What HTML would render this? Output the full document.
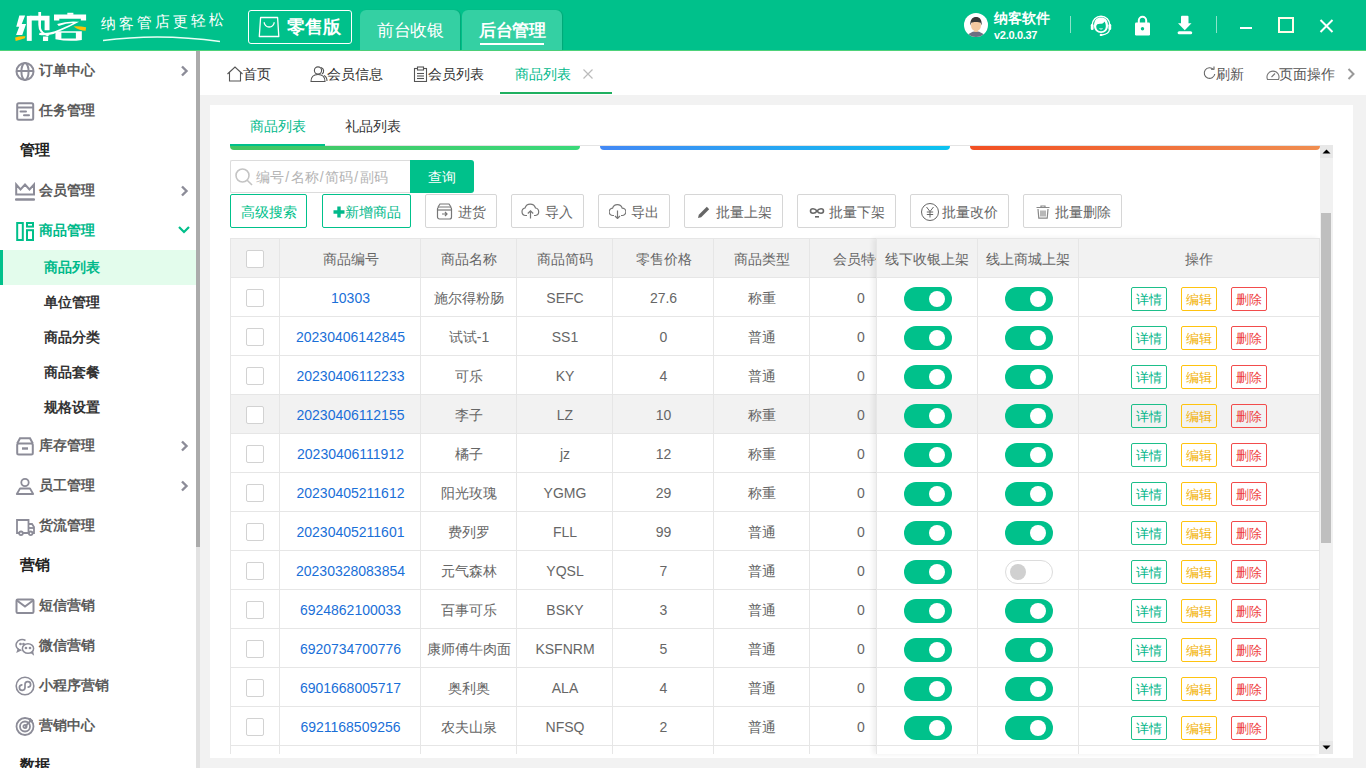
<!DOCTYPE html>
<html><head><meta charset="utf-8"><style>
*{box-sizing:border-box;margin:0;padding:0}
html,body{width:1366px;height:768px;overflow:hidden;background:#f2f2f2;font-family:"Liberation Sans",sans-serif;font-size:14px;color:#333}
.abs{position:absolute}
#hdr{position:absolute;z-index:10;left:0;top:0;width:1366px;height:51px;background:#00C18B;border-bottom:1px solid #4ED27A}
#side{position:absolute;left:0;top:50px;width:196px;height:718px;background:#fff;overflow:hidden}
#sbar{position:absolute;left:196px;top:51px;width:4px;height:717px;background:linear-gradient(#ababab 0,#ababab 496px,#e2e2e2 496px)}
.mi{position:absolute;left:0;width:196px;height:40px;font-weight:bold;color:#5b5b5b;font-size:14px;line-height:40px}
.mi .t{position:absolute;left:39px;top:0}
.mi svg.ic{position:absolute;left:16px;top:11px}
.mi .arr{position:absolute;left:178px;top:15px}
.sec{position:absolute;left:20px;font-weight:bold;color:#222;font-size:15px;line-height:40px}
.sub{position:absolute;left:0;width:196px;height:35px;line-height:35px;font-weight:bold;color:#333}
.sub .t{position:absolute;left:44px;top:0}
#tabs{position:absolute;left:200px;top:51px;width:1166px;height:44px;background:#fff}
.tb{position:absolute;top:1px;line-height:44px;color:#333;font-size:14px}
#card{position:absolute;left:210px;top:105px;width:1143px;height:653px;background:#fff}
.btnw{position:absolute;top:194px;height:34px;border:1px solid #d6d6d6;border-radius:2px;color:#666;font-size:14px;line-height:31px;text-align:center;background:#fff}
.btng{border-color:#00C18B;color:#00C18B}
.c{position:absolute;top:1px;height:38px;line-height:38px;text-align:center;color:#666;font-size:14px;white-space:nowrap}
.link{color:#1A6FD8}
.cb{position:absolute;top:10px;width:18px;height:18px;border:1px solid #d2d2d2;border-radius:2px;background:#fff}
.sw{position:absolute;top:9px;width:48px;height:24px;border-radius:12px}
.sw.on{background:#00C18B}
.sw.on:after{content:"";position:absolute;left:25px;top:4px;width:16px;height:16px;border-radius:50%;background:#fff}
.sw.off{background:#fff;border:1px solid #dcdcdc}
.sw.off:after{content:"";position:absolute;left:4px;top:3px;width:16px;height:16px;border-radius:50%;background:#d0d0d0}
.btn{position:absolute;top:9px;width:36px;height:24px;border:1px solid;border-radius:2px;font-size:13px;line-height:24px;text-align:center}
.b1{color:#00B589;border-color:#1DBF8A}
.b2{color:#F2B000;border-color:#FFC30F}
.b3{color:#EE3D3D;border-color:#F24C4C}
.vl{position:absolute;top:0;width:1px;height:516px;background:#e6e6e6}
.hl{position:absolute;left:0;width:700px;height:1px;background:#e6e6e6}
.r{position:absolute;left:0;width:700px;height:38px}
.th{position:absolute;top:2px;height:39px;line-height:39px;text-align:center;color:#666;font-size:14px}
.sl{display:inline-block;width:6.5px;text-align:center}
#tmain .c,#tmain .th{margin-left:1px}

</style></head><body>
<div id="hdr">
  <svg class="abs" style="left:10px;top:5px" width="90" height="43" viewBox="0 0 1366 653" preserveAspectRatio="none">
    <path d="M142 158 L230 158 L178 290 L244 290 L186 455 L92 455 L140 330 L95 330 Z" fill="#fff"/>
    <path d="M78 492 Q150 470 235 476 L226 505 Q150 528 86 548 Z" fill="#FFC107"/>
    <path d="M255 165 L330 165 L330 545 L255 545 Z" fill="#fff"/>
    <path d="M300 165 L600 165 L600 385 L525 385 L525 235 L300 235 Z" fill="#fff"/><path d="M502 478 L580 478 L578 548 L500 548 Z" fill="#fff"/>
    <path d="M430 108 L472 108 L470 300 Q460 400 540 430 L600 470 L560 470 Q430 430 430 300 Z" fill="#fff"/>
    <path d="M870 118 L962 118 L962 150 L870 150 Z" fill="#fff"/>
    <path d="M668 145 L1155 145 L1155 235 L1075 235 L1075 210 L748 210 L748 235 L668 235 Z" fill="#fff"/>
    <path d="M715 290 Q880 235 1048 255 Q900 340 700 420 L660 440 Q520 470 440 450 L450 420 Q560 440 680 400 Q880 320 960 275 Q850 275 740 318 Z" fill="#fff"/>
    <path d="M690 400 L1090 400 L1090 530 Q900 560 690 520 Z M780 420 L780 510 L1000 510 L1000 420 Z" fill="#fff" fill-rule="evenodd"/>
    <path d="M965 325 Q1060 320 1155 338 L1148 392 Q1060 390 965 325 Z" fill="#FFC107"/>
  </svg>
  <div class="abs" style="left:101px;top:11px;font-size:15px;line-height:22px;color:#fff;letter-spacing:3px;transform:rotate(-2deg)">纳客管店更轻松</div>
  <svg class="abs" style="left:100px;top:33px" width="124" height="12" viewBox="0 0 124 12"><path d="M3 7.5 Q60 0 120 8.5" fill="none" stroke="#E8FFF6" stroke-width="1.3"/></svg>
  <div class="abs" style="left:248px;top:10px;width:104px;height:34px;border:1px solid #fff;border-radius:3px"></div>
  <svg class="abs" style="left:258px;top:16px" width="22" height="22" viewBox="0 0 22 22" fill="none" stroke="#fff" stroke-width="1.3"><path d="M2.6 1.5 H19.6 L20.8 20.5 H1.3 Z" stroke-linejoin="round"/><path d="M6.2 6.2 A5 4.8 0 0 0 16.2 6.2"/></svg>
  <div class="abs" style="left:287px;top:15px;font-size:18px;line-height:24px;font-weight:bold;color:#fff">零售版</div>
  <div class="abs" style="left:360px;top:10px;width:100px;height:40px;background:#34D0A3;border-radius:6px 6px 0 0;box-shadow:1px 0 1px rgba(0,90,60,.25)"></div>
  <div class="abs" style="left:377px;top:20px;font-size:17px;line-height:22px;color:#fff;letter-spacing:-0.5px">前台收银</div>
  <div class="abs" style="left:462px;top:10px;width:100px;height:40px;background:#34D0A3;border-radius:6px 6px 0 0;box-shadow:1px 0 1px rgba(0,90,60,.25)"></div>
  <div class="abs" style="left:479px;top:20px;font-size:17px;line-height:22px;font-weight:bold;color:#fff;letter-spacing:-0.5px">后台管理</div>
  <div class="abs" style="left:480px;top:43px;width:64px;height:2px;background:#fff"></div>
  <svg class="abs" style="left:964px;top:13px" width="24" height="24" viewBox="0 0 24 24"><defs><clipPath id="avc"><circle cx="12" cy="12" r="12"/></clipPath></defs><circle cx="12" cy="12" r="12" fill="#fff"/><g clip-path="url(#avc)"><ellipse cx="12" cy="25" rx="8.5" ry="6.8" fill="#6E6F82"/><rect x="10.3" y="15" width="3.4" height="4" fill="#EFC096"/><ellipse cx="12" cy="12.6" rx="5" ry="5.4" fill="#F3C9A0"/><path d="M6.3 12.5 C5.8 6.5 8.8 4 12 4 C15.5 4 18.3 6.5 17.6 12.5 L16.6 9.8 C15 8.8 9 8.8 7.3 9.8 Z" fill="#383838"/></g></svg>
  <div class="abs" style="left:994px;top:10px;font-size:14px;line-height:16px;font-weight:bold;color:#fff">纳客软件</div>
  <div class="abs" style="left:994px;top:29px;font-size:11px;line-height:13px;font-weight:bold;color:#fff;letter-spacing:-0.3px">v2.0.0.37</div>
  <div class="abs" style="left:1070px;top:16px;width:1px;height:17px;background:rgba(255,255,255,.55)"></div>
  <svg class="abs" style="left:1090px;top:14px" width="22" height="22" viewBox="0 0 22 22"><path d="M2.2 11 A8.8 8.8 0 0 1 19.8 11" fill="none" stroke="#fff" stroke-width="1.4"/><path d="M4 12 C4 5.5 7 3.5 11 3.5 C15 3.5 18 5.5 18 12 C18 16 15 19 11 19 C7 19 4 16 4 12 Z" fill="#fff"/><path d="M6.2 12.5 C6.5 10 8.5 9.5 11.5 9.8 C13 9.8 14 8.5 14.3 7.5 C15.5 8.5 15.8 10.5 15.8 12.5 C15.8 15.5 13.8 17.3 11 17.3 C8.2 17.3 6.2 15.5 6.2 12.5 Z" fill="#00C18B"/><path d="M9.5 14.6 Q11 15.6 12.5 14.6" fill="none" stroke="#fff" stroke-width="0.9"/><rect x="0.8" y="10" width="2.8" height="6" rx="1.2" fill="#fff"/><rect x="18.4" y="10" width="2.8" height="6" rx="1.2" fill="#fff"/><path d="M19.5 15.5 Q19 20 12 21" fill="none" stroke="#fff" stroke-width="1.3"/><circle cx="11" cy="21" r="1.3" fill="#fff"/></svg>
  <svg class="abs" style="left:1135px;top:15px" width="16" height="21" viewBox="0 0 16 21"><path d="M3.8 8 V5.5 A3.7 3.7 0 0 1 11.2 5.5 V8" fill="none" stroke="#fff" stroke-width="2"/><rect x="0" y="7.5" width="15" height="13" rx="1.2" fill="#fff"/><circle cx="7.5" cy="13.8" r="1.7" fill="#00C18B"/></svg>
  <svg class="abs" style="left:1177px;top:15px" width="16" height="20" viewBox="0 0 16 20"><rect x="4" y="0.7" width="7.5" height="8.5" rx="1" fill="#fff"/><path d="M1 8.3 H14.5 L7.75 15.2 Z" fill="#fff"/><rect x="0.6" y="16.3" width="14.6" height="3" rx="1.5" fill="#fff"/></svg>
  <div class="abs" style="left:1216px;top:16px;width:1px;height:17px;background:rgba(255,255,255,.55)"></div>
  <div class="abs" style="left:1240px;top:27px;width:12px;height:2px;background:#fff"></div>
  <div class="abs" style="left:1278px;top:17px;width:16px;height:16px;border:2px solid #FFFDE8"></div>
  <svg class="abs" style="left:1319px;top:19px" width="15" height="14" viewBox="0 0 15 14"><path d="M1.5 1 L13.5 13 M13.5 1 L1.5 13" stroke="#fff" stroke-width="2"/></svg>
</div>
<div id="side">
<!-- top y offsets: page y - 50 -->
<div class="mi" style="top:0px"><svg class="ic" width="20" height="20" viewBox="0 0 20 20" style="left:15px;top:11px" fill="none" stroke="#8C8C98" stroke-width="2"><circle cx="10" cy="10.5" r="8.5"/><ellipse cx="10" cy="10.5" rx="3.6" ry="8.5"/><line x1="1.5" y1="10" x2="18.5" y2="10"/></svg><span class="t">订单中心</span><svg class="arr" width="12" height="12" viewBox="0 0 12 12"><path d="M4 1.5 L8.5 6 L4 10.5" fill="none" stroke="#8C8C98" stroke-width="2.4"/></svg></div>
<div class="mi" style="top:40px"><svg class="ic" width="20" height="20" viewBox="0 0 20 20" style="left:15px;top:11px" fill="none" stroke="#8C8C98" stroke-width="2"><rect x="2.2" y="2.2" width="16" height="16.5" rx="1.5"/><line x1="2" y1="6.5" x2="18" y2="6.5"/><line x1="5.5" y1="10.5" x2="11" y2="10.5" stroke-linecap="round"/><line x1="9" y1="14.2" x2="14" y2="14.2" stroke-linecap="round"/></svg><span class="t">任务管理</span></div>
<div class="sec" style="top:80px">管理</div>
<div class="mi" style="top:120px"><svg class="ic" width="20" height="20" viewBox="0 0 20 20" style="left:15px;top:12px" fill="none" stroke="#8C8C98" stroke-width="2"><path d="M1.2 2.5 V12.5 H19 V2.5 L14.5 7.5 L10 2.5 L5.5 7.5 Z" stroke-linejoin="miter"/><line x1="1" y1="17.5" x2="19" y2="17.5" stroke-width="2.5" stroke-linecap="round"/></svg><span class="t">会员管理</span><svg class="arr" width="12" height="12" viewBox="0 0 12 12"><path d="M4 1.5 L8.5 6 L4 10.5" fill="none" stroke="#8C8C98" stroke-width="2.4"/></svg></div>
<div class="mi" style="top:160px;color:#00B98A"><svg class="ic" width="20" height="20" viewBox="0 0 20 20" style="left:15px;top:12px" fill="none" stroke="#00BF8A" stroke-width="2"><rect x="2.2" y="1" width="5.6" height="17"/><rect x="12" y="1" width="6" height="3.6"/><rect x="12" y="8.2" width="6" height="9.8"/></svg><span class="t">商品管理</span><svg class="arr" width="12" height="12" viewBox="0 0 12 12" style="top:14px"><path d="M1 3 L6 8 L11 3" fill="none" stroke="#00BF8A" stroke-width="2.2"/></svg></div>
<div class="sub" style="top:200px;background:#E3FCEC;color:#00B98A"><div style="position:absolute;left:0;top:0;width:3px;height:35px;background:#00C18B"></div><span class="t">商品列表</span></div>
<div class="sub" style="top:235px"><span class="t">单位管理</span></div>
<div class="sub" style="top:270px"><span class="t">商品分类</span></div>
<div class="sub" style="top:305px"><span class="t">商品套餐</span></div>
<div class="sub" style="top:340px"><span class="t">规格设置</span></div>
<div class="mi" style="top:375px"><svg class="ic" width="20" height="20" viewBox="0 0 20 20" style="left:15px;top:11px" fill="none" stroke="#8C8C98" stroke-width="2"><path d="M2.2 7.5 L5 2.2 H15 L17.8 7.5"/><rect x="2.2" y="7.5" width="15.6" height="11" rx="1.5"/><line x1="7" y1="12.5" x2="13" y2="12.5" stroke-width="2.4"/></svg><span class="t">库存管理</span><svg class="arr" width="12" height="12" viewBox="0 0 12 12"><path d="M4 1.5 L8.5 6 L4 10.5" fill="none" stroke="#8C8C98" stroke-width="2.4"/></svg></div>
<div class="mi" style="top:415px"><svg class="ic" width="20" height="20" viewBox="0 0 20 20" style="left:15px;top:11px" fill="none" stroke="#8C8C98" stroke-width="1.8"><circle cx="10" cy="6.5" r="3.7"/><path d="M1.8 18 L5 12.5 H15 L18.2 18 Z" stroke-linejoin="round"/></svg><span class="t">员工管理</span><svg class="arr" width="12" height="12" viewBox="0 0 12 12"><path d="M4 1.5 L8.5 6 L4 10.5" fill="none" stroke="#8C8C98" stroke-width="2.4"/></svg></div>
<div class="mi" style="top:455px"><svg class="ic" width="20" height="20" viewBox="0 0 20 20" style="left:15px;top:12px" fill="none" stroke="#8C8C98" stroke-width="1.8"><path d="M4 16 H2 V3 H13.5 V16 H8"/><path d="M13.5 7 H17 L19 10 V16 H17.5"/><line x1="13.5" y1="11" x2="19" y2="11"/><circle cx="6" cy="16.3" r="1.8"/><circle cx="15.7" cy="16.3" r="1.8"/></svg><span class="t">货流管理</span></div>
<div class="sec" style="top:495px">营销</div>
<div class="mi" style="top:535px"><svg class="ic" width="20" height="20" viewBox="0 0 20 20" style="left:15px;top:11px" fill="none" stroke="#8C8C98" stroke-width="2"><rect x="1.5" y="3.5" width="17" height="13.5" rx="1.2"/><path d="M2 4.5 L10 10.5 L18 4.5"/></svg><span class="t">短信营销</span></div>
<div class="mi" style="top:575px"><svg class="ic" width="20" height="20" viewBox="0 0 20 20" style="left:15px;top:11px" fill="none" stroke="#8C8C98" stroke-width="1.5"><path d="M6.5 14.5 A6 5.5 0 1 1 10.5 4.5"/><path d="M3.5 12.5 L2.5 15.5 L5.5 14"/><ellipse cx="13" cy="12.5" rx="5.6" ry="4.8"/><path d="M16 16.5 L18 18 L17.5 15.5"/><circle cx="5.5" cy="8" r=".6" fill="#8C8C98"/><circle cx="8.5" cy="8" r=".6" fill="#8C8C98"/><circle cx="11" cy="12" r=".6" fill="#8C8C98"/><circle cx="15" cy="12" r=".6" fill="#8C8C98"/></svg><span class="t">微信营销</span></div>
<div class="mi" style="top:615px"><svg class="ic" width="20" height="20" viewBox="0 0 20 20" style="left:15px;top:11px" fill="none" stroke="#8C8C98" stroke-width="1.6"><circle cx="10" cy="10" r="8.8"/><path d="M13.2 11.2 A2.8 2.8 0 1 0 10 8.4 V11.6 A2.8 2.8 0 1 1 6.8 8.8" stroke-width="1.7" stroke-linecap="round"/></svg><span class="t">小程序营销</span></div>
<div class="mi" style="top:655px"><svg class="ic" width="20" height="20" viewBox="0 0 20 20" style="left:15px;top:11px" fill="none" stroke="#8C8C98" stroke-width="1.8"><circle cx="10" cy="10.5" r="8.5"/><circle cx="10" cy="10.5" r="5"/><circle cx="10" cy="10.5" r="1.6"/><path d="M10 10.5 L17 3.5 M15 2 V5 H18"/></svg><span class="t">营销中心</span></div>
<div class="sec" style="top:695px">数据</div>
</div>
<div id="sbar"></div>
<div id="tabs">
<svg class="abs" style="left:26px;top:15px" width="18" height="16" viewBox="0 0 18 16" fill="none" stroke="#555" stroke-width="1.1"><path d="M1.5 8 L9 1 L16.5 8 M3.5 6.5 V15 H14.5 V6.5"/></svg>
<div class="tb" style="left:43px">首页</div>
<svg class="abs" style="left:110px;top:15px" width="18" height="16" viewBox="0 0 18 16" fill="none" stroke="#555" stroke-width="1.1"><circle cx="8" cy="4.5" r="3.6"/><path d="M1 15.5 C1 10 4 8.5 8 8.5 C12 8.5 15 10 15 15.5 Z"/><path d="M11 1.5 A3.6 3.6 0 0 1 12 8 M14 9.5 C16 10.5 17 12 17 15"/></svg>
<div class="tb" style="left:127px">会员信息</div>
<svg class="abs" style="left:213px;top:15px" width="15" height="16" viewBox="0 0 15 16" fill="none" stroke="#555" stroke-width="1.1"><rect x="1.5" y="2.5" width="12" height="13"/><rect x="4.5" y="1" width="6" height="3" fill="#fff"/><line x1="4" y1="7.5" x2="11" y2="7.5"/><line x1="4" y1="10" x2="11" y2="10"/><line x1="4" y1="12.5" x2="11" y2="12.5"/></svg>
<div class="tb" style="left:228px">会员列表</div>
<div class="tb" style="left:315px;color:#00B98A">商品列表</div>
<svg class="abs" style="left:383px;top:18px" width="10" height="10" viewBox="0 0 10 10" stroke="#bbb" stroke-width="1.2"><path d="M0.5 0.5 L9.5 9.5 M9.5 0.5 L0.5 9.5"/></svg>
<div class="abs" style="left:300px;top:41px;width:112px;height:2px;background:#1FB060"></div>
<svg class="abs" style="left:1003px;top:15px" width="13" height="14" viewBox="0 0 13 14" fill="none" stroke="#666" stroke-width="1.1"><path d="M10.5 3.5 A5.3 5.3 0 1 0 11.8 8"/><path d="M8 3.3 H11 V0.5"/></svg>
<div class="tb" style="left:1016px;color:#555">刷新</div>
<svg class="abs" style="left:1066px;top:16px" width="14" height="14" viewBox="0 0 14 14" fill="none" stroke="#777" stroke-width="1.1"><path d="M1.5 12.5 A6 6 0 1 1 12.5 12.5 Z"/><path d="M5.5 10 L9 6.5"/></svg>
<div class="tb" style="left:1079px;color:#555">页面操作</div>
<svg class="abs" style="left:1146px;top:17px" width="10" height="12" viewBox="0 0 10 12"><path d="M2.5 1 L7.5 6 L2.5 11" fill="none" stroke="#999" stroke-width="2"/></svg>
</div>
<div id="card"></div>
<div class="abs" style="left:250px;top:114px;line-height:24px;color:#00B98A">商品列表</div>
<div class="abs" style="left:345px;top:114px;line-height:24px;color:#333">礼品列表</div>
<div class="abs" style="left:230px;top:145px;width:1090px;height:1px;background:#e4e4e4"></div>
<div class="abs" style="left:230px;top:144px;width:95px;height:2px;background:#00C18B"></div>
<div class="abs" style="left:230px;top:146px;width:350px;height:4px;border-radius:0 0 5px 5px;background:linear-gradient(90deg,#44C463,#3AD97A)"></div>
<div class="abs" style="left:600px;top:146px;width:350px;height:4px;border-radius:0 0 5px 5px;background:linear-gradient(90deg,#4388F5,#0BC3F0)"></div>
<div class="abs" style="left:970px;top:146px;width:350px;height:4px;border-radius:0 0 5px 5px;background:linear-gradient(90deg,#F24F22,#F08E50)"></div>
<!-- search -->
<div class="abs" style="left:230px;top:160px;width:181px;height:33px;border:1px solid #dcdcdc;border-right:none;border-radius:2px 0 0 2px;background:#fff"></div>
<svg class="abs" style="left:234px;top:167px" width="20" height="20" viewBox="0 0 20 20" fill="none" stroke="#c4c4c4" stroke-width="1.6"><circle cx="8.5" cy="8.5" r="6.5"/><path d="M13.2 13.2 L18 18"/></svg>
<div class="abs" style="left:256px;top:161px;line-height:33px;color:#b4b4b4;font-size:14px">编号<span class="sl">/</span>名称<span class="sl">/</span>简码<span class="sl">/</span>副码</div>
<div class="abs" style="left:410px;top:160px;width:64px;height:33px;background:#00C18B;border-radius:0 3px 3px 0;color:#fff;line-height:35px;text-align:center;font-size:14px">查询</div>
<!-- buttons -->
<div class="btnw btng" style="left:230px;width:77px;line-height:35px">高级搜索</div>
<div class="btnw btng" style="left:322px;width:89px"></div><svg class="abs" style="left:333px;top:206px" width="12" height="12" viewBox="0 0 12 12"><path d="M4.3 0.5 H7.7 V4.3 H11.5 V7.7 H7.7 V11.5 H4.3 V7.7 H0.5 V4.3 H4.3 Z" fill="#00B98A"/></svg><div class="abs" style="left:345px;top:196px;line-height:33px;color:#00B98A">新增商品</div>
<div class="btnw" style="left:425px;width:72px"></div>
<svg class="abs" style="left:436px;top:203px" width="17" height="17" viewBox="0 0 17 17" fill="none" stroke="#777" stroke-width="1.2"><path d="M2 4 L4 1 H13 L15 4"/><rect x="1.5" y="4" width="14" height="12" rx="2"/><path d="M1.5 7 H15.5"/><path d="M6 11 H11 M9 9 L11 11 L9 13"/></svg>
<div class="abs" style="left:458px;top:196px;line-height:33px;color:#666">进货</div>
<div class="btnw" style="left:511px;width:73px"></div>
<svg class="abs" style="left:521px;top:203px" width="19" height="16" viewBox="0 0 19 16" fill="none" stroke="#777" stroke-width="1.2"><path d="M6 12.5 H4.5 A3.8 3.8 0 0 1 4 5 A5.5 5.5 0 0 1 14.5 5 A3.8 3.8 0 0 1 14.5 12.5 H13"/><path d="M9.5 15.5 V8 M6.8 10.5 L9.5 7.8 L12.2 10.5"/></svg>
<div class="abs" style="left:545px;top:196px;line-height:33px;color:#666">导入</div>
<div class="btnw" style="left:598px;width:72px"></div>
<svg class="abs" style="left:609px;top:203px" width="17" height="16" viewBox="0 0 17 16" fill="none" stroke="#777" stroke-width="1.2"><path d="M5 12.5 H4 A3.5 3.5 0 0 1 3.6 5.2 A5 5 0 0 1 13.2 5.2 A3.5 3.5 0 0 1 13.2 12.5 H12"/><path d="M8.5 7.5 V15.5 M6 13 L8.5 15.5 L11 13"/></svg>
<div class="abs" style="left:631px;top:196px;line-height:33px;color:#666">导出</div>
<div class="btnw" style="left:684px;width:99px"></div>
<svg class="abs" style="left:697px;top:205px" width="14" height="14" viewBox="0 0 14 14"><path d="M1 13 L1.8 9.8 L9.8 1.8 L12.2 4.2 L4.2 12.2 Z" fill="#666"/></svg>
<div class="abs" style="left:716px;top:196px;line-height:33px;color:#666">批量上架</div>
<div class="btnw" style="left:797px;width:99px"></div>
<svg class="abs" style="left:809px;top:206px" width="16" height="12" viewBox="0 0 16 12" fill="none" stroke="#666" stroke-width="1.6"><path d="M8 5 C6 2 1.5 2 1.5 5 C1.5 8 6 8 8 5 C10 2 14.5 2 14.5 5 C14.5 8 10 8 8 5"/><path d="M6 10.8 H10"/></svg>
<div class="abs" style="left:829px;top:196px;line-height:33px;color:#666">批量下架</div>
<div class="btnw" style="left:910px;width:99px"></div>
<svg class="abs" style="left:920px;top:202px" width="20" height="20" viewBox="0 0 20 20" fill="none" stroke="#666" stroke-width="1"><circle cx="10" cy="10" r="8.5"/><path d="M6.5 5 L10 9.5 L13.5 5 M10 9.5 V15.5 M6.8 10 H13.2 M6.8 12.5 H13.2"/></svg>
<div class="abs" style="left:942px;top:196px;line-height:33px;color:#666">批量改价</div>
<div class="btnw" style="left:1023px;width:99px"></div>
<svg class="abs" style="left:1036px;top:205px" width="14" height="14" viewBox="0 0 14 14" fill="none" stroke="#888" stroke-width="1.2"><path d="M0.5 2.5 H13.5 M5 2.5 V1 H9 V2.5"/><path d="M2 4 L2.8 13.2 H11.2 L12 4"/><path d="M5 5.5 V11.5 M7 5.5 V11.5 M9 5.5 V11.5"/></svg>
<div class="abs" style="left:1055px;top:196px;line-height:33px;color:#666">批量删除</div>
<div id="tmain" style="position:absolute;left:230px;top:238px;width:646px;height:516px;overflow:hidden">
<div class="abs" style="left:0;top:0;width:700px;height:39px;background:#f2f2f2"></div>
<div class="abs" style="left:0;top:157px;width:700px;height:39px;background:#f2f2f2"></div>
<span class="cb" style="left:16px;top:12px"></span>
<div class="th" style="left:49px;width:141px">商品编号</div>
<div class="th" style="left:190px;width:96px">商品名称</div>
<div class="th" style="left:286px;width:96px">商品简码</div>
<div class="th" style="left:382px;width:101px">零售价格</div>
<div class="th" style="left:483px;width:96px">商品类型</div>
<div class="th" style="left:602px;width:80px;text-align:left">会员特价</div>
<div class="r" style="top:40px"><span class="cb" style="left:16px;top:11px"></span><span class="c link" style="left:49px;width:141px">10303</span><span class="c" style="left:190px;width:96px">施尔得粉肠</span><span class="c" style="left:286px;width:96px">SEFC</span><span class="c" style="left:382px;width:101px">27.6</span><span class="c" style="left:483px;width:96px">称重</span><span class="c" style="left:581px;width:98px">0</span></div>
<div class="r" style="top:79px"><span class="cb" style="left:16px;top:11px"></span><span class="c link" style="left:49px;width:141px">20230406142845</span><span class="c" style="left:190px;width:96px">试试-1</span><span class="c" style="left:286px;width:96px">SS1</span><span class="c" style="left:382px;width:101px">0</span><span class="c" style="left:483px;width:96px">普通</span><span class="c" style="left:581px;width:98px">0</span></div>
<div class="r" style="top:118px"><span class="cb" style="left:16px;top:11px"></span><span class="c link" style="left:49px;width:141px">20230406112233</span><span class="c" style="left:190px;width:96px">可乐</span><span class="c" style="left:286px;width:96px">KY</span><span class="c" style="left:382px;width:101px">4</span><span class="c" style="left:483px;width:96px">普通</span><span class="c" style="left:581px;width:98px">0</span></div>
<div class="r" style="top:157px"><span class="cb" style="left:16px;top:11px"></span><span class="c link" style="left:49px;width:141px">20230406112155</span><span class="c" style="left:190px;width:96px">李子</span><span class="c" style="left:286px;width:96px">LZ</span><span class="c" style="left:382px;width:101px">10</span><span class="c" style="left:483px;width:96px">称重</span><span class="c" style="left:581px;width:98px">0</span></div>
<div class="r" style="top:196px"><span class="cb" style="left:16px;top:11px"></span><span class="c link" style="left:49px;width:141px">20230406111912</span><span class="c" style="left:190px;width:96px">橘子</span><span class="c" style="left:286px;width:96px">jz</span><span class="c" style="left:382px;width:101px">12</span><span class="c" style="left:483px;width:96px">称重</span><span class="c" style="left:581px;width:98px">0</span></div>
<div class="r" style="top:235px"><span class="cb" style="left:16px;top:11px"></span><span class="c link" style="left:49px;width:141px">20230405211612</span><span class="c" style="left:190px;width:96px">阳光玫瑰</span><span class="c" style="left:286px;width:96px">YGMG</span><span class="c" style="left:382px;width:101px">29</span><span class="c" style="left:483px;width:96px">称重</span><span class="c" style="left:581px;width:98px">0</span></div>
<div class="r" style="top:274px"><span class="cb" style="left:16px;top:11px"></span><span class="c link" style="left:49px;width:141px">20230405211601</span><span class="c" style="left:190px;width:96px">费列罗</span><span class="c" style="left:286px;width:96px">FLL</span><span class="c" style="left:382px;width:101px">99</span><span class="c" style="left:483px;width:96px">普通</span><span class="c" style="left:581px;width:98px">0</span></div>
<div class="r" style="top:313px"><span class="cb" style="left:16px;top:11px"></span><span class="c link" style="left:49px;width:141px">20230328083854</span><span class="c" style="left:190px;width:96px">元气森林</span><span class="c" style="left:286px;width:96px">YQSL</span><span class="c" style="left:382px;width:101px">7</span><span class="c" style="left:483px;width:96px">普通</span><span class="c" style="left:581px;width:98px">0</span></div>
<div class="r" style="top:352px"><span class="cb" style="left:16px;top:11px"></span><span class="c link" style="left:49px;width:141px">6924862100033</span><span class="c" style="left:190px;width:96px">百事可乐</span><span class="c" style="left:286px;width:96px">BSKY</span><span class="c" style="left:382px;width:101px">3</span><span class="c" style="left:483px;width:96px">普通</span><span class="c" style="left:581px;width:98px">0</span></div>
<div class="r" style="top:391px"><span class="cb" style="left:16px;top:11px"></span><span class="c link" style="left:49px;width:141px">6920734700776</span><span class="c" style="left:190px;width:96px">康师傅牛肉面</span><span class="c" style="left:286px;width:96px">KSFNRM</span><span class="c" style="left:382px;width:101px">5</span><span class="c" style="left:483px;width:96px">普通</span><span class="c" style="left:581px;width:98px">0</span></div>
<div class="r" style="top:430px"><span class="cb" style="left:16px;top:11px"></span><span class="c link" style="left:49px;width:141px">6901668005717</span><span class="c" style="left:190px;width:96px">奥利奥</span><span class="c" style="left:286px;width:96px">ALA</span><span class="c" style="left:382px;width:101px">4</span><span class="c" style="left:483px;width:96px">普通</span><span class="c" style="left:581px;width:98px">0</span></div>
<div class="r" style="top:469px"><span class="cb" style="left:16px;top:11px"></span><span class="c link" style="left:49px;width:141px">6921168509256</span><span class="c" style="left:190px;width:96px">农夫山泉</span><span class="c" style="left:286px;width:96px">NFSQ</span><span class="c" style="left:382px;width:101px">2</span><span class="c" style="left:483px;width:96px">普通</span><span class="c" style="left:581px;width:98px">0</span></div>
<div class="hl" style="top:0px"></div>
<div class="hl" style="top:39px"></div>
<div class="hl" style="top:78px"></div>
<div class="hl" style="top:117px"></div>
<div class="hl" style="top:156px"></div>
<div class="hl" style="top:195px"></div>
<div class="hl" style="top:234px"></div>
<div class="hl" style="top:273px"></div>
<div class="hl" style="top:312px"></div>
<div class="hl" style="top:351px"></div>
<div class="hl" style="top:390px"></div>
<div class="hl" style="top:429px"></div>
<div class="hl" style="top:468px"></div>
<div class="hl" style="top:507px"></div>
<div class="vl" style="left:0px"></div>
<div class="vl" style="left:49px"></div>
<div class="vl" style="left:190px"></div>
<div class="vl" style="left:286px"></div>
<div class="vl" style="left:382px"></div>
<div class="vl" style="left:483px"></div>
<div class="vl" style="left:579px"></div>
</div>
<div id="tfix" style="position:absolute;left:876px;top:238px;width:444px;height:516px;overflow:hidden;background:#fff;box-shadow:-3px 0 5px rgba(0,0,0,.07)">
<div class="abs" style="left:0;top:0;width:444px;height:39px;background:#f2f2f2"></div>
<div class="abs" style="left:0;top:157px;width:444px;height:39px;background:#f2f2f2"></div>
<div class="th" style="left:0px;width:101px">线下收银上架</div>
<div class="th" style="left:101px;width:101px">线上商城上架</div>
<div class="th" style="left:202px;width:242px">操作</div>
<div class="r" style="top:40px"><span class="sw on" style="left:28px"></span><span class="sw on" style="left:129px"></span><span class="btn b1" style="left:255px">详情</span><span class="btn b2" style="left:305px">编辑</span><span class="btn b3" style="left:355px">删除</span></div>
<div class="r" style="top:79px"><span class="sw on" style="left:28px"></span><span class="sw on" style="left:129px"></span><span class="btn b1" style="left:255px">详情</span><span class="btn b2" style="left:305px">编辑</span><span class="btn b3" style="left:355px">删除</span></div>
<div class="r" style="top:118px"><span class="sw on" style="left:28px"></span><span class="sw on" style="left:129px"></span><span class="btn b1" style="left:255px">详情</span><span class="btn b2" style="left:305px">编辑</span><span class="btn b3" style="left:355px">删除</span></div>
<div class="r" style="top:157px"><span class="sw on" style="left:28px"></span><span class="sw on" style="left:129px"></span><span class="btn b1" style="left:255px">详情</span><span class="btn b2" style="left:305px">编辑</span><span class="btn b3" style="left:355px">删除</span></div>
<div class="r" style="top:196px"><span class="sw on" style="left:28px"></span><span class="sw on" style="left:129px"></span><span class="btn b1" style="left:255px">详情</span><span class="btn b2" style="left:305px">编辑</span><span class="btn b3" style="left:355px">删除</span></div>
<div class="r" style="top:235px"><span class="sw on" style="left:28px"></span><span class="sw on" style="left:129px"></span><span class="btn b1" style="left:255px">详情</span><span class="btn b2" style="left:305px">编辑</span><span class="btn b3" style="left:355px">删除</span></div>
<div class="r" style="top:274px"><span class="sw on" style="left:28px"></span><span class="sw on" style="left:129px"></span><span class="btn b1" style="left:255px">详情</span><span class="btn b2" style="left:305px">编辑</span><span class="btn b3" style="left:355px">删除</span></div>
<div class="r" style="top:313px"><span class="sw on" style="left:28px"></span><span class="sw off" style="left:129px"></span><span class="btn b1" style="left:255px">详情</span><span class="btn b2" style="left:305px">编辑</span><span class="btn b3" style="left:355px">删除</span></div>
<div class="r" style="top:352px"><span class="sw on" style="left:28px"></span><span class="sw on" style="left:129px"></span><span class="btn b1" style="left:255px">详情</span><span class="btn b2" style="left:305px">编辑</span><span class="btn b3" style="left:355px">删除</span></div>
<div class="r" style="top:391px"><span class="sw on" style="left:28px"></span><span class="sw on" style="left:129px"></span><span class="btn b1" style="left:255px">详情</span><span class="btn b2" style="left:305px">编辑</span><span class="btn b3" style="left:355px">删除</span></div>
<div class="r" style="top:430px"><span class="sw on" style="left:28px"></span><span class="sw on" style="left:129px"></span><span class="btn b1" style="left:255px">详情</span><span class="btn b2" style="left:305px">编辑</span><span class="btn b3" style="left:355px">删除</span></div>
<div class="r" style="top:469px"><span class="sw on" style="left:28px"></span><span class="sw on" style="left:129px"></span><span class="btn b1" style="left:255px">详情</span><span class="btn b2" style="left:305px">编辑</span><span class="btn b3" style="left:355px">删除</span></div>
<div class="hl" style="top:0px"></div>
<div class="hl" style="top:39px"></div>
<div class="hl" style="top:78px"></div>
<div class="hl" style="top:117px"></div>
<div class="hl" style="top:156px"></div>
<div class="hl" style="top:195px"></div>
<div class="hl" style="top:234px"></div>
<div class="hl" style="top:273px"></div>
<div class="hl" style="top:312px"></div>
<div class="hl" style="top:351px"></div>
<div class="hl" style="top:390px"></div>
<div class="hl" style="top:429px"></div>
<div class="hl" style="top:468px"></div>
<div class="hl" style="top:507px"></div>
<div class="vl" style="left:0px"></div>
<div class="vl" style="left:101px"></div>
<div class="vl" style="left:202px"></div>
<div class="vl" style="left:443px"></div>
</div>
<div class="abs" style="left:1320px;top:145px;width:13px;height:609px;background:#f1f1f1"></div>
<div class="abs" style="left:1320px;top:145px;width:13px;height:13px;background:#e8e8e8"></div>
<svg class="abs" style="left:1320px;top:145px" width="13" height="13" viewBox="0 0 13 13"><path d="M2.5 8.5 L6.5 4.5 L10.5 8.5 Z" fill="#000"/></svg>
<div class="abs" style="left:1320px;top:741px;width:13px;height:13px;background:#e8e8e8"></div>
<svg class="abs" style="left:1320px;top:741px" width="13" height="13" viewBox="0 0 13 13"><path d="M2.5 4.5 L6.5 8.5 L10.5 4.5 Z" fill="#000"/></svg>
<div class="abs" style="left:1321px;top:213px;width:10px;height:330px;background:#bfbfbf"></div>

</body></html>
